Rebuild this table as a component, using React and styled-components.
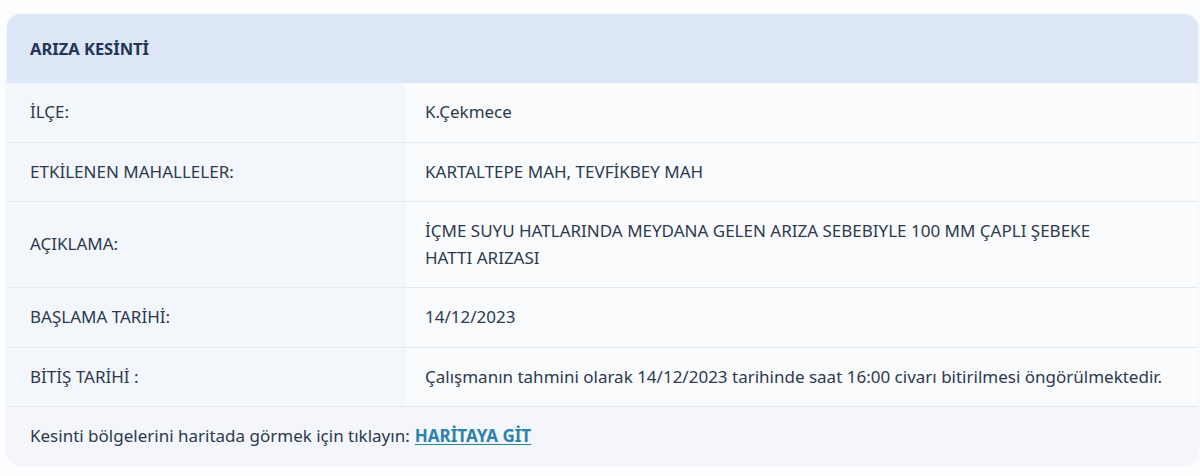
import React from "react";
import styled, { createGlobalStyle } from "styled-components";

const Global = createGlobalStyle`
  html, body { margin: 0; padding: 0; background: #fcfdfe; }
  body { font-family: "Noto Sans", "Open Sans", sans-serif; color: #2c3a4e; }
`;

const Page = styled.div`
  padding: 14px 2px 12px 7px;
`;

const Card = styled.div`
  border-radius: 14px;
  overflow: hidden;
  background: #f4f6fb;
  box-shadow: 0 1px 4px rgba(40, 60, 100, 0.08);
`;

const Header = styled.div`
  height: 69px;
  display: flex;
  align-items: center;
  padding: 0 23px;
  background: #dde6f6;
  font-weight: 700;
  font-size: 16.5px;
  color: #223559;
`;

const Row = styled.div`
  display: grid;
  grid-template-columns: 398px 1fr;
  border-bottom: 1px solid #e4e8ef;
`;

const Label = styled.div`
  background: #f3f6fb;
  padding: 16px 23px;
  display: flex;
  align-items: center;
  font-size: 17px;
  line-height: 26.5px;
  color: #2c3a4e;
`;

const Value = styled.div`
  background: #fafbfd;
  padding: 16px 20px;
  display: flex;
  align-items: center;
  font-size: 17px;
  line-height: 26.5px;
  color: #2c3a4e;
`;

const Footer = styled.div`
  height: 57px;
  display: flex;
  align-items: center;
  padding: 0 23px;
  font-size: 17px;
  color: #2c3a4e;
  background: #f4f6fb;
`;

const Link = styled.a`
  margin-left: 5px;
  font-weight: 700;
  color: #2b82aa;
  text-decoration: underline;
  text-underline-offset: 2px;
  cursor: pointer;
`;

const ValueText = styled.span`
  max-width: ${(p) => p.$max || "none"};
`;

const rows = [
  ["İLÇE:", "K.Çekmece"],
  ["ETKİLENEN MAHALLELER:", "KARTALTEPE MAH, TEVFİKBEY MAH"],
  ["AÇIKLAMA:", "İÇME SUYU HATLARINDA MEYDANA GELEN ARIZA SEBEBIYLE 100 MM ÇAPLI ŞEBEKE HATTI ARIZASI"],
  ["BAŞLAMA TARİHİ:", "14/12/2023"],
  ["BİTİŞ TARİHİ :", "Çalışmanın tahmini olarak 14/12/2023 tarihinde saat 16:00 civarı bitirilmesi öngörülmektedir."],
];

export default function App() {
  return (
    <>
      <Global />
      <Page>
        <Card>
          <Header>ARIZA KESİNTİ</Header>
          {rows.map(([l, v], i) => (
            <Row key={i}>
              <Label>{l}</Label>
              <Value>
                <ValueText $max={i === 2 ? "700px" : undefined}>{v}</ValueText>
              </Value>
            </Row>
          ))}
          <Footer>
            Kesinti bölgelerini haritada görmek için tıklayın:
            <Link>HARİTAYA GİT</Link>
          </Footer>
        </Card>
      </Page>
    </>
  );
}
